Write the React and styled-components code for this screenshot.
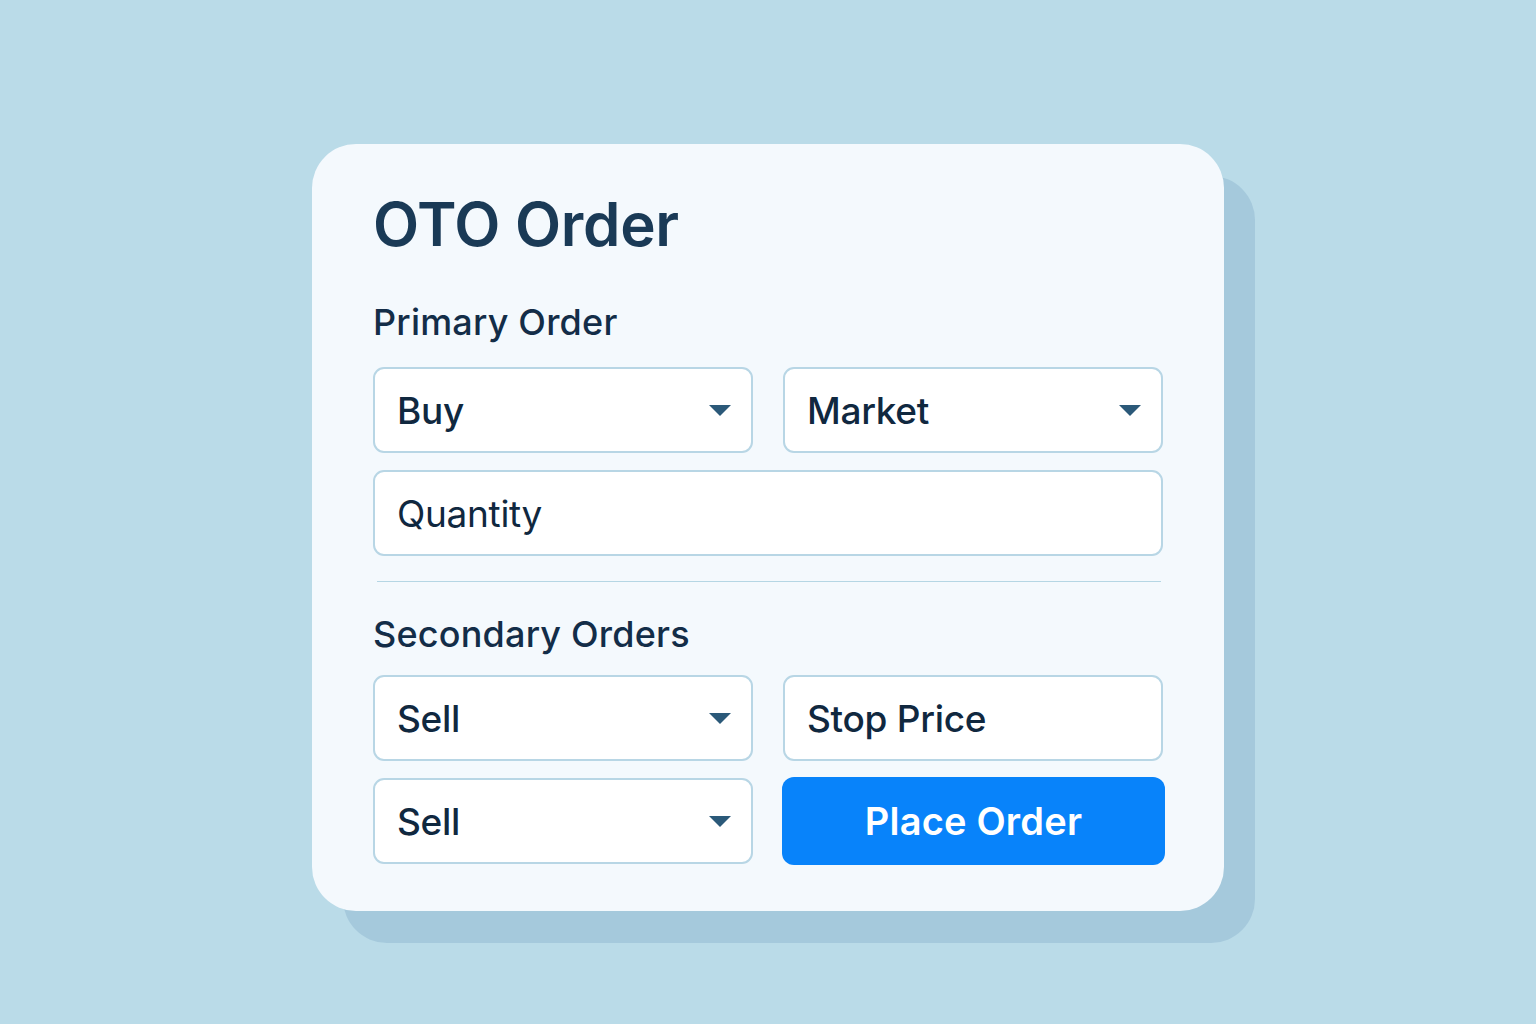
import React from 'react';
import styled, { createGlobalStyle } from 'styled-components';

const GlobalStyle = createGlobalStyle`
    html, body {
        margin: 0;
        padding: 0;
        background: #badbe8;
        font-family: Inter, "Noto Sans", "Liberation Sans", sans-serif;
    }
`;

const Page = styled.div`
    min-height: 1024px;
    display: flex;
    justify-content: center;
    align-items: flex-start;
    padding-top: 144px;
    box-sizing: border-box;
`;

const Card = styled.div`
    width: 912px;
    box-sizing: border-box;
    padding: 44px 61px 46px 61px;
    background: #f4f9fd;
    border-radius: 44px;
    box-shadow: 31px 32px 0 #a5c9dc;
`;

const Title = styled.h1`
    margin: 0 0 40px;
    font-size: 60px;
    line-height: 72px;
    font-weight: 600;
    letter-spacing: -0.3px;
    color: #1a3a56;
`;

const Section = styled.h2`
    margin: 0 0 ${(p) => p.$gap}px;
    font-size: 36px;
    line-height: 44px;
    font-weight: 500;
    letter-spacing: 0.2px;
    color: #132d48;
`;

const Grid = styled.div`
    display: grid;
    grid-template-columns: 1fr 1fr;
    gap: 17px 30px;
`;

const Field = styled.div`
    grid-column: ${(p) => (p.$wide ? '1 / -1' : 'auto')};
    height: 86px;
    box-sizing: border-box;
    display: flex;
    align-items: center;
    justify-content: space-between;
    padding: 0 20px 0 22px;
    background: #ffffff;
    border: 2px solid #b8d6e5;
    border-radius: 11px;
    font-size: 37px;
    font-weight: ${(p) => (p.$light ? 400 : 500)};
    letter-spacing: -0.3px;
    color: #10283f;
`;

const Caret = styled.span`
    width: 0;
    height: 0;
    border-left: 11px solid transparent;
    border-right: 11px solid transparent;
    border-top: 11px solid #2b5979;
`;

const Divider = styled.hr`
    margin: 25px 2px 30px 4px;
    border: 0;
    border-top: 1.5px solid #b5d6e4;
`;

const Button = styled.button`
    height: 88px;
    margin: -1px -2px 0 -1px;
    border: 0;
    border-radius: 12px;
    background: #0883fa;
    color: #ffffff;
    font-family: inherit;
    font-size: 38px;
    font-weight: 600;
    letter-spacing: 0.2px;
`;

const Select = ({ label }) => (
    <Field>
        {label}
        <Caret />
    </Field>
);

const App = () => (
    <>
        <GlobalStyle />
        <Page>
            <Card>
                <Title>OTO Order</Title>
                <Section $gap={23}>Primary Order</Section>
                <Grid>
                    <Select label="Buy" />
                    <Select label="Market" />
                    <Field $wide $light>Quantity</Field>
                </Grid>
                <Divider />
                <Section $gap={19}>Secondary Orders</Section>
                <Grid>
                    <Select label="Sell" />
                    <Field>Stop Price</Field>
                    <Select label="Sell" />
                    <Button>Place Order</Button>
                </Grid>
            </Card>
        </Page>
    </>
);

export default App;
